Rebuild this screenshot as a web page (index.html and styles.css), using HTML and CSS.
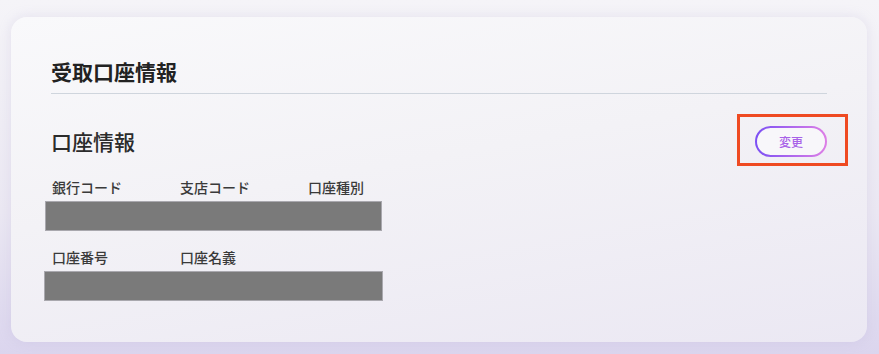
FILE: index.html
```html
<!DOCTYPE html>
<html lang="ja">

<head>
    <meta charset="UTF-8">
    <meta name="viewport" content="width=device-width, initial-scale=1.0">
    <title>受取口座情報</title>
    <link rel="stylesheet" href="styles.css">
</head>

<body>
    <div class="card">
        <h2 class="card-title">受取口座情報</h2>
        <div class="section">
            <div class="section-head">
                <h3>口座情報</h3>
                <button class="change-btn">変更<span class="mark"></span></button>
            </div>
            <div class="fields">
                <div class="labels">
                    <span>銀行コード</span>
                    <span>支店コード</span>
                    <span>口座種別</span>
                </div>
                <div class="redact"></div>
                <div class="labels second">
                    <span>口座番号</span>
                    <span>口座名義</span>
                </div>
                <div class="redact wide"></div>
            </div>
        </div>
    </div>
</body>

</html>
```

FILE: styles.css
```css
html,body {
    margin: 0;
    height: 100%;
}

body {
    font-family: "Noto Sans CJK JP", "Noto Sans", sans-serif;
    color: #333;
    background: linear-gradient(180deg, #f5f4f8 0%, #ebe8f3 60%, #dbd5ee 100%);
    padding: 17px 12px 0 11px;
    box-sizing: border-box;
}

.card {
    width: 856px;
    height: 325px;
    box-sizing: border-box;
    padding: 40px 40px 0 40px;
    border-radius: 16px;
    background: linear-gradient(170deg, #f9f9fb 0%, #f3f2f6 45%, #ebe8f3 100%);
    box-shadow: 0 0 12px rgba(180, 170, 210, 0.25);
}

.card-title {
    margin: 0;
    font-size: 21px;
    line-height: 28px;
    font-weight: 700;
    color: #222;
    padding-bottom: 8px;
    border-bottom: 1px solid #cfd5dd;
}

.section-head {
    display: flex;
    justify-content: space-between;
    align-items: center;
    margin-top: 32px;
    height: 31px;
}

.section-head h3 {
    margin: 0;
    font-size: 21px;
    font-weight: 500;
    line-height: 31px;
    color: #2b2b2b;
}

.change-btn {
    position: relative;
    width: 72px;
    height: 31px;
    border-radius: 16px;
    border: 2px solid transparent;
    background: linear-gradient(#f8f7fa, #f8f7fa) padding-box,
        linear-gradient(90deg, #7b4ff4, #de7fe6) border-box;
    font-family: inherit;
    font-size: 12px;
    font-weight: 500;
    color: #a862e8;
    cursor: pointer;
    padding: 0;
}

.change-btn .mark {
    position: absolute;
    top: -14px;
    left: -20px;
    right: -23px;
    bottom: -11px;
    border: 3px solid #ef4a22;
}

.fields {
    margin-top: 20px;
}

.labels {
    display: grid;
    grid-template-columns: 128px 128px 128px;
    font-size: 14px;
    line-height: 20px;
    font-weight: 500;
    color: #3a3a3a;
    padding-left: 1px;
}

.labels.second {
    margin-top: 16px;
}

.redact {
    margin: 4px 0 0 -6px;
    width: 335px;
    height: 28px;
    background: #7a7a7a;
    border: 1px solid #a9a8ae;
}

.redact.wide {
    margin-left: -7px;
    width: 337px;
}
```
